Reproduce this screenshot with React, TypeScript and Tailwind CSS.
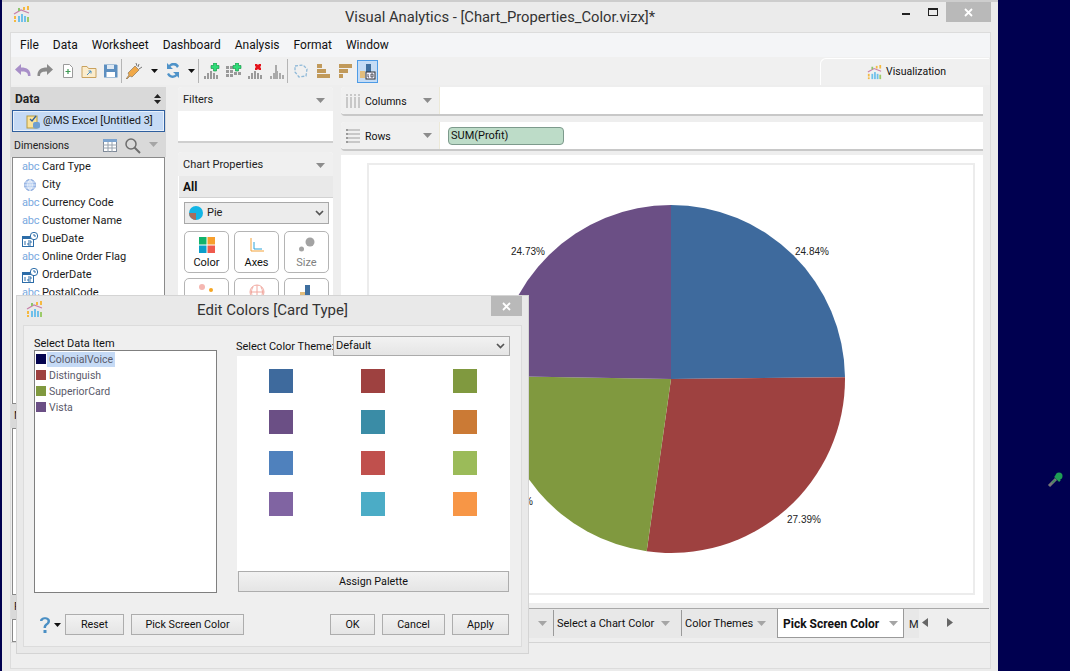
import React from "react";

const Caret = ({ c = "#8c8c8c" }: { c?: string }) => (
  <svg width="9" height="5" viewBox="0 0 9 5"><path d="M0 0h9L4.5 5z" fill={c} /></svg>
);
const BlackCaret = () => (
  <svg width="7" height="4" viewBox="0 0 7 4"><path d="M0 0h7L3.5 4z" fill="#111" /></svg>
);
const Chevron = () => (
  <svg width="9" height="6" viewBox="0 0 9 6"><path d="M1 1l3.5 3.5L8 1" fill="none" stroke="#555" strokeWidth="1.7" /></svg>
);

const Logo = ({ s = 17 }: { s?: number }) => (
  <svg width={s} height={s} viewBox="0 0 17 17">
    <path d="M1 8l7-4 8 3" fill="none" stroke="#c77fa8" strokeWidth="1.2" />
    <rect x="1" y="10" width="2" height="3" fill="#f5b942" />
    <rect x="1" y="14" width="2" height="2" fill="#f5b942" />
    <rect x="5" y="10" width="2" height="6" fill="#6fc0ea" />
    <rect x="8" y="8" width="2" height="8" fill="#6fc0ea" />
    <rect x="11" y="10" width="2" height="6" fill="#6fc0ea" />
    <rect x="14" y="11" width="2" height="5" fill="#9ccb6a" />
    <rect x="5" y="2" width="2" height="3" fill="#8cc56c" />
    <rect x="10" y="1" width="2" height="3" fill="#f5b942" />
    <rect x="14" y="0" width="2" height="4" fill="#f5b942" />
  </svg>
);

const Bars = ({ c = "#9a9a9a" }: { c?: string }) => (
  <>
    <rect x="0" y="13" width="2" height="3" fill={c} />
    <rect x="3" y="10" width="2" height="6" fill={c} />
    <rect x="6" y="8" width="2" height="8" fill={c} />
    <rect x="9" y="10" width="2" height="6" fill={c} />
    <rect x="12" y="12" width="2" height="4" fill={c} />
  </>
);
const Plus = ({ x, y }: { x: number; y: number }) => (
  <path transform={`translate(${x} ${y})`} d="M2.5 0h3v2.5H8v3H5.5V8h-3V5.5H0v-3h2.5z" fill="#2fdc78" stroke="#0d8f3c" strokeWidth=".6" />
);

const I = ({ children, w = 22 }: { children: React.ReactNode; w?: number }) => (
  <div className="flex items-center justify-start h-[24px]" style={{ width: w }}>
    <svg width="16" height="16" viewBox="0 0 16 16">{children}</svg>
  </div>
);
const Sep = () => <div className="w-px h-[24px] bg-[#b5b5b5]" />;

function Toolbar() {
  return (
    <div className="flex items-center h-[28px] pl-[4px] bg-[#f0f0f0]">
      <I><path d="M6 1L0 6.500 6 12V8.500c4 0 7 .5 7 4.500h2.500C16 7 12 4.500 6 4.500z" fill="#a88fc8" /></I>
      <I w={23}><path d="M10 1l6 5.500L10 12V8.500c-4 0-7 .5-7 4.500H.5C0 7 4 4.500 10 4.500z" fill="#8a8a8a" /></I>
      <I w={21}><path d="M3.500 1.500h6l3 3v10h-9z" fill="#fff" stroke="#9a9a9a" /><path d="M8 6v5M5.500 8.500h5" stroke="#3f9a55" strokeWidth="1.2" /></I>
      <I><path d="M1 3.500h5l1.500 2h7.500v9H1z" fill="#fbeccc" stroke="#c9a25e" /><path d="M6 12l4-4M7.500 8H10v2.500" stroke="#4a90c2" fill="none" /></I>
      <I w={18}><path d="M1 1.500h12.500l1 1v12H1z" fill="#5d8fc0" /><rect x="4" y="2" width="7" height="4" fill="#dfe9f3" /><rect x="3.500" y="9" width="8.500" height="5" fill="#fff" /></I>
      <Sep />
      <div className="w-[4px]" />
      <I w={25}><path d="M0 16l3-4-1-2 7-7 4 4-7 7-2-1-3 3z" fill="#f0a848" stroke="#7a6a50" strokeWidth=".6" /><path d="M10 0l1 3M13 1l-1 3M16 4l-3 2" stroke="#777" /></I>
      <BlackCaret />
      <div className="w-[7px]" />
      <I w={23}><path d="M14 3a6 6 0 00-10-1L2 0v6h6L5.500 3.700A4 4 0 0112 5zM2 11a6 6 0 0010 2l2 2V9H8l2.500 2.300A4 4 0 014 10z" fill="#4f93c9" /></I>
      <BlackCaret />
      <div className="w-[3px]" />
      <Sep />
      <div className="w-[5px]" />
      <I><Bars /><Plus x={7} y={0} /></I>
      <I><rect x="0" y="3" width="3" height="3" fill="#999" /><rect x="4" y="3" width="3" height="3" fill="#999" /><rect x="0" y="7" width="3" height="3" fill="#999" /><rect x="4" y="7" width="3" height="3" fill="#999" /><rect x="8" y="9" width="3" height="3" fill="#999" /><rect x="0" y="11" width="3" height="3" fill="#999" /><rect x="4" y="11" width="3" height="3" fill="#999" /><rect x="12" y="9" width="3" height="3" fill="#999" /><Plus x={7} y={0} /></I>
      <I><Bars /><path d="M7 1h2l1 1 1-1h2v2l-1 1 1 1v2h-2l-1-1-1 1H7V5l1-1-1-1z" fill="#e5141c" /></I>
      <I w={17}><Bars c="#aaa" /><rect x="5" y="2" width="2" height="14" fill="#aaa" /></I>
      <Sep />
      <div className="w-[5px]" />
      <I w={23}><path d="M2 3l8-1 4 4-1 7-7 1-4-5z" fill="none" stroke="#8fb9d8" strokeWidth="1.300" strokeDasharray="3 1.500" /></I>
      <I><rect x="1" y="1" width="5" height="4" fill="#c19a5b" /><rect x="1" y="6" width="9" height="4" fill="#c19a5b" /><rect x="1" y="11" width="13" height="4" fill="#c19a5b" /></I>
      <I w={19}><rect x="1" y="1" width="13" height="4" fill="#c19a5b" /><rect x="1" y="6" width="9" height="4" fill="#c19a5b" /><rect x="1" y="11" width="4" height="4" fill="#c19a5b" /></I>
      <div className="w-[21px] h-[23px] border border-[#4d9be6] bg-[#c5dcf5] flex items-center justify-center">
        <svg width="17" height="17" viewBox="0 0 17 17">
          <rect x="1" y="8" width="5" height="7" fill="#e2bd7c" />
          <rect x="7" y="1" width="5" height="10" fill="#3f6f9f" />
          <rect x="7" y="9" width="9" height="7" fill="#eef" stroke="#333" />
          <path d="M9 11v3h1M12 11h2v3h-2z" fill="none" stroke="#333" strokeWidth=".8" />
        </svg>
      </div>
      <div className="flex-1" />
      <div className="w-[169px] h-[27px] self-end bg-[#f0f0f0] border-t border-l border-white rounded-tl-[6px] flex items-center pl-[46px] gap-[4px] mr-px">
        <Logo s={15} />
        <span className="text-[#111] text-[10.5px]">Visualization</span>
      </div>
    </div>
  );
}

const Abc = () => <span className="block w-[19px] -mt-[2px] text-[#7aa9e0] text-[11px] leading-none tracking-[-0.2px]">abc</span>;
const Globe = () => (
  <div className="w-[19px] pl-[2px]">
    <svg width="12" height="12" viewBox="0 0 12 12"><circle cx="6" cy="6" r="5.500" fill="#a6c2ec" stroke="#7d9fd8" /><path d="M0 6h12M6 0v12M1 3h10M1 9h10M6 .5c-3 3-3 8 0 11M6 .5c3 3 3 8 0 11" stroke="#fff" strokeWidth=".7" fill="none" /></svg>
  </div>
);
const DateI = () => (
  <div className="w-[19px]">
    <svg width="17" height="15" viewBox="0 0 17 15">
      <rect x="0.500" y="4.500" width="11" height="10" fill="#fff" stroke="#2d6da8" />
      <rect x="0" y="4" width="12" height="3" fill="#2d6da8" />
      <path d="M3 9v4M6 9h3v2H6v2h3" stroke="#2d6da8" fill="none" />
      <circle cx="12" cy="4" r="3.700" fill="#fff" stroke="#2d6da8" />
      <path d="M12 2v2h2" stroke="#2d6da8" fill="none" />
    </svg>
  </div>
);

const dims: [React.ReactNode, string][] = [
  [<Abc />, "Card Type"],
  [<Globe />, "City"],
  [<Abc />, "Currency Code"],
  [<Abc />, "Customer Name"],
  [<DateI />, "DueDate"],
  [<Abc />, "Online Order Flag"],
  [<DateI />, "OrderDate"],
  [<Abc />, "PostalCode"],
];

function LeftPanel() {
  return (
    <div className="w-[155px] shrink-0 flex flex-col h-full">
      <div className="h-[23px] bg-[#d9d9d9] flex items-center justify-between pl-[4px] pr-[5px] font-bold text-[12px]">
        <span>Data</span>
        <svg width="7" height="10" viewBox="0 0 7 10"><path d="M3.500 0L7 4H0zM3.500 10L0 6h7z" fill="#222" /></svg>
      </div>
      <div className="h-[23px] bg-[#d9d9d9] px-[1px] flex">
        <div className="flex-1 h-[22px] border border-[#2f5f9e] outline-1 -outline-offset-2 outline-[#e9f1fb] bg-[#c5daf5] flex items-center pl-[13px] gap-[2px] whitespace-nowrap">
          <svg width="15" height="15" viewBox="0 0 15 15"><rect x="1" y="2" width="10" height="12" fill="#fbe39a" stroke="#b59a40" /><path d="M4 5l2 2 4-5" stroke="#2f5f9e" fill="none" strokeWidth="1.300" /><rect x="7" y="8" width="7" height="6.500" rx="2" fill="#6f9fd0" /></svg>
          <span className="text-[#1a1a1a]">@MS Excel [Untitled 3]</span>
        </div>
      </div>
      <div className="h-[24px] pt-px bg-[#d9d9d9] flex items-center pl-[3px] text-[#222]">
        <span className="flex-1 text-[10.5px]">Dimensions</span>
        <svg width="14" height="13" viewBox="0 0 14 13" className="mr-[7px]"><rect x=".5" y=".5" width="13" height="12" fill="#fff" stroke="#7f8a99" /><rect x="0" y="0" width="14" height="3" fill="#7da4cf" /><path d="M0 6h14M0 9h14M5 3v10M9 3v10" stroke="#98a2ad" /></svg>
        <svg width="17" height="17" viewBox="0 0 17 17" className="mr-[8px]"><circle cx="7" cy="7" r="5" fill="none" stroke="#6e6e6e" strokeWidth="1.500" /><path d="M10.500 10.500L16 16" stroke="#6e6e6e" strokeWidth="2" /></svg>
        <div className="mr-[8px] mb-[2px]"><Caret c="#a5a5a5" /></div>
      </div>
      <div className="h-[247px] mx-[1px] border border-[#8a8a8a] bg-white overflow-hidden">
        {dims.map(([ic, t]) => (
          <div key={t} className="h-[18px] flex items-center pl-[9px] pr-1 whitespace-nowrap text-[#1a1a1a]">
            <div className="w-[20px] flex items-center">{ic}</div>
            <span>{t}</span>
          </div>
        ))}
      </div>
      <div className="h-[24px] bg-[#d9d9d9] flex items-center pl-[3px]">Measures</div>
      <div className="h-[167px] mx-[1px] border border-[#8a8a8a] bg-white" />
      <div className="h-[24px] bg-[#d9d9d9] flex items-center pl-[3px]">Parameters</div>
      <div className="h-[23px] mx-[1px] border border-[#8a8a8a] bg-white" />
    </div>
  );
}

const Btn = ({ label, gray, children }: { label?: string; gray?: boolean; children: React.ReactNode }) => (
  <div className="h-[42px] rounded-[5px] border border-[#b4b4b4] bg-white flex flex-col items-center pt-[3px]">
    <div className="h-[20px] flex items-center">{children}</div>
    {label && <span className={gray ? "text-[#808080] leading-[15px]" : "text-[#111] leading-[15px]"}>{label}</span>}
  </div>
);

function MiddlePanel() {
  return (
    <div className="w-[155px] shrink-0 flex flex-col h-full">
      <div className="h-[56px] rounded-t-[4px] bg-white border-b-2 border-[#cfcfcf]">
        <div className="h-[24px] pt-[2px] bg-[#f0f0f0] rounded-t-[4px] flex items-center justify-between pl-[5px] pr-[8px] text-[#222]">
          <span>Filters</span><Caret />
        </div>
      </div>
      <div className="flex-1 mt-[9px] bg-white rounded-t-[4px] border-b-2 border-[#cfcfcf] flex flex-col">
        <div className="h-[24px] pt-[2px] bg-[#f0f0f0] rounded-t-[4px] flex items-center justify-between pl-[5px] pr-[8px] text-[#222]">
          <span>Chart Properties</span><Caret />
        </div>
        <div className="h-[22px] ml-px bg-[#e9e9e9] border-b border-[#d2d2d2] flex items-center pl-[4px] font-bold text-[12px] text-[#111]">All</div>
        <div className="ml-[6px] mr-[4px] mt-[4px] h-[22px] px-[4px] bg-[#ececec] border border-[#a8a8a8] flex items-center justify-between">
          <div className="flex items-center gap-[4px]">
            <svg width="14" height="14" viewBox="0 0 14 14"><circle cx="7" cy="7" r="7" fill="#12b5e5" /><path d="M7 7v7A7 7 0 010 7z" fill="#a86d5c" /></svg>
            <span>Pie</span>
          </div>
          <Chevron />
        </div>
        <div className="ml-[6px] mr-[4px] mt-[7px] grid grid-cols-3 gap-x-[5px] gap-y-[5px]">
          <Btn label="Color">
            <svg width="16" height="16" viewBox="0 0 16 16"><rect width="7.500" height="7.500" fill="#12b36a" /><rect x="8.500" width="7.500" height="7.500" fill="#f79f2d" /><rect y="8.500" width="7.500" height="7.500" fill="#0b9fca" /><rect x="8.500" y="8.500" width="7.500" height="7.500" fill="#ef5a4e" /></svg>
          </Btn>
          <Btn label="Axes">
            <svg width="14" height="14" viewBox="0 0 14 14"><path d="M1 0v13h13" fill="none" stroke="#f2a23a" /><path d="M4 4v7h8" fill="none" stroke="#2aa3d8" /></svg>
          </Btn>
          <Btn label="Size" gray>
            <svg width="16" height="16" viewBox="0 0 16 16"><circle cx="11" cy="5" r="4.500" fill="#a3a3a3" /><circle cx="2.500" cy="12" r="2.500" fill="#a3a3a3" /></svg>
          </Btn>
          <Btn><svg width="16" height="16" viewBox="0 0 16 16"><circle cx="3" cy="3" r="3" fill="#f5b7b1" /><circle cx="12" cy="6" r="2" fill="#f5a623" /><circle cx="12" cy="13" r="2" fill="#7cc4f0" /><circle cx="3" cy="13" r="2" fill="#9ccb8a" /></svg></Btn>
          <Btn><svg width="16" height="16" viewBox="0 0 16 16"><circle cx="8" cy="8" r="7" fill="none" stroke="#f1a9a0" /><path d="M1 8h14M8 1v14M4 3c-2 3-2 7 0 10M12 3c2 3 2 7 0 10" stroke="#f1a9a0" fill="none" /></svg></Btn>
          <Btn><svg width="16" height="16" viewBox="0 0 16 16"><rect x="1" y="8" width="5" height="8" fill="#e2bd7c" /><rect x="6" y="1" width="5" height="11" fill="#3f6f9f" /></svg></Btn>
        </div>
      </div>
    </div>
  );
}

function polar(p: number, r = 174) {
  const a = (p / 100) * 2 * Math.PI;
  return [304 + r * Math.sin(a), 216 - r * Math.cos(a)];
}
function slice(from: number, to: number) {
  const [x1, y1] = polar(from);
  const [x2, y2] = polar(to);
  return `M304 216L${x1} ${y1}A174 174 0 0 1 ${x2} ${y2}Z`;
}

function Shelf({ name, icon, children }: { name: string; icon: React.ReactNode; children?: React.ReactNode }) {
  return (
    <div className="h-[29px] flex rounded-l-[4px] bg-white border-b-2 border-[#c8c8c8]">
      <div className="w-[99px] bg-[#f0f0f0] rounded-l-[4px] border-r border-[#ece9d8] flex items-center pl-[5px] text-[#111]">
        {icon}
        <span className="flex-1 ml-[5px] pt-[2px] text-[10.5px]">{name}</span>
        <div className="mr-[7px]"><Caret /></div>
      </div>
      <div className="flex-1 flex items-center pl-[8px]">{children}</div>
    </div>
  );
}

function RightPanel() {
  return (
    <div className="w-[642px] ml-[8px] shrink-0 flex flex-col h-full">
      <Shelf
        name="Columns"
        icon={<svg width="14" height="14" viewBox="0 0 14 14"><path d="M1 0v14M5 0v14M9 0v14M13 0v14" stroke="#c8c8c8" strokeWidth="2" strokeDasharray="2 1 11" /></svg>}
      />
      <div className="h-[6px]" />
      <Shelf
        name="Rows"
        icon={<svg width="14" height="14" viewBox="0 0 14 14"><path d="M0 1h14M0 5h14M0 9h14M0 13h14" stroke="#c8c8c8" strokeWidth="2" /><path d="M0 1h2M0 5h2M0 9h2M0 13h2" stroke="#9a9a9a" strokeWidth="2" /></svg>}
      >
        <div className="w-[116px] h-[18px] pt-px rounded-[4px] bg-[#bddcc8] border border-[#7d9a8c] flex items-center pl-[2px] text-[#111]">SUM(Profit)</div>
      </Shelf>
      <div className="h-[4px]" />
      <div className="h-[448px] bg-white pt-[8px] pl-[26px] pr-[8px] pb-[8px]">
        <div className="h-full border-2 border-[#ececec]">
          <svg width="608" height="428" viewBox="0 0 608 428" className="-ml-[2px] -mt-[2px]">
            <path d={slice(0, 24.84)} fill="#3e6a9d" />
            <path d={slice(24.84, 52.23)} fill="#9e4140" />
            <path d={slice(52.23, 75.27)} fill="#80993f" />
            <path d={slice(75.27, 100)} fill="#6b4f85" />
            <g fontSize="10" fill="#222" fontFamily="'Liberation Sans', sans-serif">
              <text x="428" y="92">24.84%</text>
              <text x="420" y="360">27.39%</text>
              <text x="144" y="92">24.73%</text>
              <text x="132" y="342">23.04%</text>
            </g>
          </svg>
        </div>
      </div>
    </div>
  );
}

const Tab = ({ t, w, active }: { t: string; w: number; active?: boolean }) => (
  <div
    className={active
      ? "h-[29px] bg-white border-x border-b border-[#9a9a9a] font-bold text-[12px] text-[#111] flex items-center justify-between pl-[5px] pr-[5px] shrink-0 whitespace-nowrap"
      : "h-[26px] mt-px border-l border-[#9a9a9a] flex items-center justify-between pl-[3px] pr-[11px] text-[#111] shrink-0 whitespace-nowrap"}
    style={{ width: w }}
  >
    <span className={active ? "pt-px" : "pt-[3px]"}>{t}</span>
    <Caret c="#a5a5a5" />
  </div>
);

function TabBar() {
  return (
    <div className="h-[30px] mt-[5px] flex border-t border-[#a8a8a8] mr-px bg-[#eeeeee]">
      <div className="flex w-[741px] h-[29px] bg-[#e8e8e8] overflow-hidden">
        <div className="w-[375px] shrink-0 flex items-center justify-end pr-[6px]"><Caret c="#a5a5a5" /></div>
        <Tab t="Select a Chart Color" w={128} />
        <Tab t="Color Themes" w={96} />
        <Tab t="Pick Screen Color" w={127} active />
        <span className="pl-[5px] pt-[8px]">M</span>
      </div>
      <div className="flex items-center pb-[2px] pl-[3px] gap-[19px]">
        <svg width="6" height="9" viewBox="0 0 6 9"><path d="M6 0v9L0 4.500z" fill="#666" /></svg>
        <svg width="6" height="9" viewBox="0 0 6 9"><path d="M0 0v9l6-4.500z" fill="#666" /></svg>
      </div>
    </div>
  );
}

const DBtn = ({ t, w, className = "" }: { t: string; w: number; className?: string }) => (
  <div
    className={"h-[21px] pt-px shrink-0 border border-[#adadad] bg-gradient-to-b from-[#f2f2f2] to-[#e5e5e5] flex items-center justify-center text-[#111] text-[10.75px] whitespace-nowrap " + className}
    style={{ width: w }}
  >
    {t}
  </div>
);

const items: [string, string, boolean][] = [
  ["#04044f", "ColonialVoice", true],
  ["#9e4140", "Distinguish", false],
  ["#80993f", "SuperiorCard", false],
  ["#6b4f85", "Vista", false],
];
const swatches = ["#3e6a9d", "#9e4140", "#80993f", "#6b4f85", "#3a8ca6", "#cb7a35", "#4f81bd", "#c0504d", "#9bbb59", "#8064a2", "#4bacc6", "#f79646"];

function Dialog() {
  return (
    <div className="absolute left-[16px] top-[295px] w-[513px] h-[359px] bg-[#e9e9e9] border border-[#d4d4d4] flex flex-col px-[6px] pb-[6px]">
      <div className="h-[29px] shrink-0 flex items-center relative">
        <div className="ml-[3px] -mt-[2px]"><Logo s={17} /></div>
        <div className="flex-1 text-center text-[15px] text-[#333] pr-[20px]">Edit Colors [Card Type]</div>
        <div className="absolute right-0 top-0 w-[31px] h-[20px] bg-[#b9b9b9] flex items-center justify-center">
          <svg width="9" height="9" viewBox="0 0 9 9"><path d="M1 1l7 7M8 1L1 8" stroke="#fff" strokeWidth="1.800" /></svg>
        </div>
      </div>
      <div className="flex-1 bg-[#efefef] border border-[#dcdcdc] flex flex-col pl-[10px] pr-[11px] pt-[10px]">
        <div className="flex h-[257px] shrink-0">
          <div className="w-[183px] flex flex-col">
            <div className="h-[14px] pt-px leading-[14px] text-[#111] text-[11px]">Select Data Item</div>
            <div className="h-[243px] border border-[#7f7f7f] bg-white pl-[1px]">
              {items.map(([c, t, sel]) => (
                <div key={t} className="h-[16px] flex items-center">
                  <div className="w-[10px] h-[10px]" style={{ background: c }} />
                  <span className={"ml-[1px] px-[2px] text-[#5a5a6a] text-[10.5px] h-[15px] leading-[15px] " + (sel ? "bg-[#c5daf5]" : "")}>{t}</span>
                </div>
              ))}
            </div>
          </div>
          <div className="w-[273px] ml-[20px] flex flex-col">
            <div className="flex items-center h-[20px] -ml-px">
              <span className="text-[#111] whitespace-nowrap w-[97px] pt-[2px]">Select Color Theme:</span>
              <div className="flex-1 h-[20px] border border-[#ababab] bg-gradient-to-b from-[#f2f2f2] to-[#e5e5e5] flex items-center justify-between pl-[2px] pr-[4px]">
                <span className="text-[#111] pt-px">Default</span><Chevron />
              </div>
            </div>
            <div className="h-[215px] bg-white grid grid-cols-[24px_24px_24px] justify-between auto-rows-[24px] gap-y-[17px] pt-[13px] pl-[32px] pr-[33px]">
              {swatches.map((c, i) => (
                <div key={i} className="w-[24px] h-[24px]" style={{ background: c }} />
              ))}
            </div>
            <DBtn t="Assign Palette" w={271} className="ml-px" />
          </div>
        </div>
        <div className="flex items-center mt-[21px] mr-px">
          <svg width="14" height="18" viewBox="0 0 14 18" className="ml-[4px]"><path d="M2 5c0-5 10-5 10 0 0 4-4 3.500-4 7H5.500c0-5 4-4 4-7 0-2.500-5-2.500-5 0z" fill="#4a8fc4" /><rect x="5.500" y="14" width="3" height="3" fill="#4a8fc4" /></svg>
          <div className="ml-[2px] mr-[4px]"><BlackCaret /></div>
          <DBtn t="Reset" w={59} />
          <DBtn t="Pick Screen Color" w={113} className="ml-[7px]" />
          <div className="flex-1" />
          <DBtn t="OK" w={45} />
          <DBtn t="Cancel" w={63} className="ml-[7px]" />
          <DBtn t="Apply" w={57} className="ml-[7px]" />
        </div>
      </div>
    </div>
  );
}

export default function App() {
  return (
    <div className="relative w-[1070px] h-[671px] overflow-hidden flex bg-[#000050] text-[11px] font-['Roboto','Open_Sans',sans-serif] text-[#222]">
      <div className="w-[2px] shrink-0" />
      <div className="w-[996px] h-[671px] shrink-0 bg-[#ebebeb] border-t-2 border-t-[#cdcdcd] flex flex-col">
        <div className="h-[30px] shrink-0 flex items-center relative">
          <div className="ml-[11px] -mt-[6px]"><Logo /></div>
          <div className="flex-1 text-center text-[14.75px] text-[#333] pr-[28px]">Visual Analytics - [Chart_Properties_Color.vizx]*</div>
          <div className="absolute right-[7px] top-0 h-[20px] flex items-start">
            <div className="w-[8px] h-[2px] bg-[#222] mt-[11px] mr-[18px]" />
            <div className="w-[10px] h-[8px] border border-[#222] border-t-2 mt-[6px] mr-[8px]" />
            <div className="w-[45px] h-[20px] bg-[#b9b9b9] flex items-center justify-center">
              <svg width="9" height="9" viewBox="0 0 9 9"><path d="M1 1l7 7M8 1L1 8" stroke="#fff" strokeWidth="1.800" /></svg>
            </div>
          </div>
        </div>
        <div className="ml-[8px] mr-[7px] h-[637px] border border-[#dcdcdc] bg-[#eeeeee] flex flex-col">
          <div className="h-[24px] shrink-0 bg-[#f4f5f7] flex items-center pl-[9px] gap-[14px] text-[12px] text-[#111]">
            <span>File</span><span>Data</span><span>Worksheet</span><span>Dashboard</span><span>Analysis</span><span>Format</span><span>Window</span>
          </div>
          <Toolbar />
          <div className="h-[2px]" />
          <div className="flex h-[555px] overflow-hidden">
            <LeftPanel />
            <div className="flex-1 ml-[12px] flex flex-col">
              <div className="flex h-[516px] shrink-0 overflow-hidden">
                <MiddlePanel />
                <RightPanel />
              </div>
              <TabBar />
            </div>
          </div>
          <div className="flex-1 border-t border-[#d4d4d4]" />
        </div>
      </div>
      <Dialog />
      <svg width="18" height="18" viewBox="0 0 18 18" className="absolute left-[1046px] top-[472px]">
        <path d="M10 7L3 14" stroke="#777" strokeWidth="3" />
        <path d="M9 8L6 11" stroke="#3f8f5f" strokeWidth="1.500" />
        <path d="M9 4l5 5" stroke="#1f9d55" strokeWidth="2.500" />
        <circle cx="13" cy="4" r="3.500" fill="#1f9d55" />
      </svg>
    </div>
  );
}
